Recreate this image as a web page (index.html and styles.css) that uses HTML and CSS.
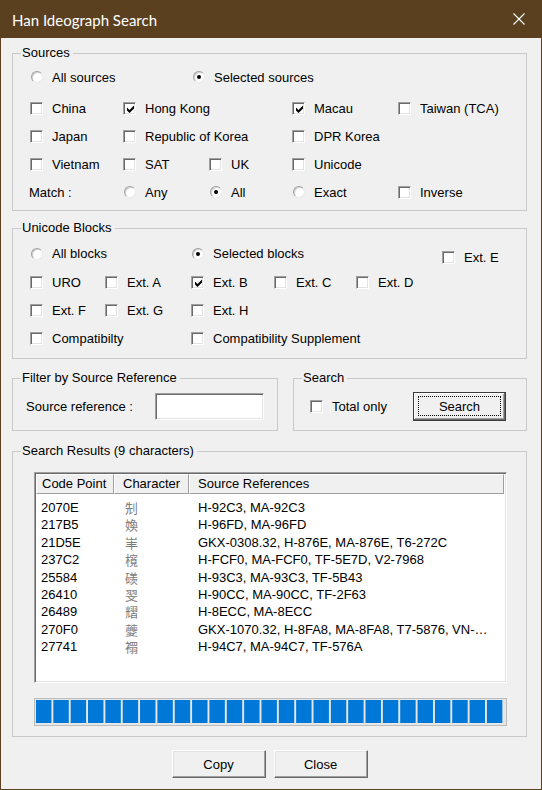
FILE: index.html
```html
<!DOCTYPE html>
<html lang="en">
<head>
    <meta charset="UTF-8">
    <title>Han Ideograph Search</title>
    <link rel="stylesheet" href="styles.css">
</head>
<body>
    <div class="window">
        <div class="titlebar">
            <span class="title">Han Ideograph Search</span>
            <svg class="close" width="12" height="12" viewBox="0 0 12 12">
                <path d="M0.5 0.5 L11.5 11.5 M11.5 0.5 L0.5 11.5" stroke="#fff" stroke-width="1.1" fill="none"/>
            </svg>
        </div>

        <div class="dialog">
            <fieldset class="group sources">
                <legend>Sources</legend>
                <div class="row first">
                    <label class="opt wide"><span class="radio"></span>All sources</label>
                    <label class="opt"><span class="radio on"></span>Selected sources</label>
                </div>
                <div class="src-grid">
                    <label class="opt"><span class="box"></span>China</label>
                    <label class="opt span2"><span class="box"><svg class="tick" width="8" height="8" viewBox="0 0 8 8"><path d="M0 2.5 L2.5 5 L7 0.5 L7 3.5 L2.5 8 L0 5.5 Z"/></svg></span>Hong Kong</label>
                    <label class="opt"><span class="box"><svg class="tick" width="8" height="8" viewBox="0 0 8 8"><path d="M0 2.5 L2.5 5 L7 0.5 L7 3.5 L2.5 8 L0 5.5 Z"/></svg></span>Macau</label>
                    <label class="opt"><span class="box"></span>Taiwan (TCA)</label>

                    <label class="opt"><span class="box"></span>Japan</label>
                    <label class="opt span2"><span class="box"></span>Republic of Korea</label>
                    <label class="opt"><span class="box"></span>DPR Korea</label>

                    <label class="opt newline"><span class="box"></span>Vietnam</label>
                    <label class="opt"><span class="box"></span>SAT</label>
                    <label class="opt"><span class="box"></span>UK</label>
                    <label class="opt"><span class="box"></span>Unicode</label>

                    <span class="match newline">Match :</span>
                    <label class="opt"><span class="radio"></span>Any</label>
                    <label class="opt"><span class="radio on"></span>All</label>
                    <label class="opt"><span class="radio"></span>Exact</label>
                    <label class="opt"><span class="box"></span>Inverse</label>
                </div>
            </fieldset>

            <fieldset class="group blocks">
                <legend>Unicode Blocks</legend>
                <div class="blk-grid">
                    <label class="opt span2"><span class="radio"></span>All blocks</label>
                    <label class="opt span3"><span class="radio on"></span>Selected blocks</label>
                    <label class="opt lower"><span class="box"></span>Ext. E</label>

                    <label class="opt"><span class="box"></span>URO</label>
                    <label class="opt"><span class="box"></span>Ext. A</label>
                    <label class="opt"><span class="box"><svg class="tick" width="8" height="8" viewBox="0 0 8 8"><path d="M0 2.5 L2.5 5 L7 0.5 L7 3.5 L2.5 8 L0 5.5 Z"/></svg></span>Ext. B</label>
                    <label class="opt"><span class="box"></span>Ext. C</label>
                    <label class="opt"><span class="box"></span>Ext. D</label>

                    <label class="opt newline"><span class="box"></span>Ext. F</label>
                    <label class="opt"><span class="box"></span>Ext. G</label>
                    <label class="opt"><span class="box"></span>Ext. H</label>

                    <label class="opt newline span2"><span class="box"></span>Compatibilty</label>
                    <label class="opt span4"><span class="box"></span>Compatibility Supplement</label>
                </div>
            </fieldset>

            <div class="pair">
                <fieldset class="group filter">
                    <legend>Filter by Source Reference</legend>
                    <div class="row">
                        <span class="field-label">Source reference :</span>
                        <span class="textbox"></span>
                    </div>
                </fieldset>
                <fieldset class="group search">
                    <legend>Search</legend>
                    <div class="row">
                        <label class="opt total"><span class="box"></span>Total only</label>
                        <button class="btn default"><span class="focus">Search</span></button>
                    </div>
                </fieldset>
            </div>

            <fieldset class="group results">
                <legend>Search Results (9 characters)</legend>
                <div class="list">
                    <div class="list-head">
                        <span>Code Point</span>
                        <span>Character</span>
                        <span>Source References</span>
                    </div>
                    <div class="list-body">
                        <div class="list-row"><span>2070E</span><span class="han">𠜎</span><span>H-92C3, MA-92C3</span></div>
                        <div class="list-row"><span>217B5</span><span class="han">𡞵</span><span>H-96FD, MA-96FD</span></div>
                        <div class="list-row"><span>21D5E</span><span class="han">𡵞</span><span>GKX-0308.32, H-876E, MA-876E, T6-272C</span></div>
                        <div class="list-row"><span>237C2</span><span class="han">𣟂</span><span>H-FCF0, MA-FCF0, TF-5E7D, V2-7968</span></div>
                        <div class="list-row"><span>25584</span><span class="han">𥖄</span><span>H-93C3, MA-93C3, TF-5B43</span></div>
                        <div class="list-row"><span>26410</span><span class="han">𦐐</span><span>H-90CC, MA-90CC, TF-2F63</span></div>
                        <div class="list-row"><span>26489</span><span class="han">𦒉</span><span>H-8ECC, MA-8ECC</span></div>
                        <div class="list-row"><span>270F0</span><span class="han">𧃰</span><span>GKX-1070.32, H-8FA8, MA-8FA8, T7-5876, VN-…</span></div>
                        <div class="list-row"><span>27741</span><span class="han">𧝁</span><span>H-94C7, MA-94C7, TF-576A</span></div>
                    </div>
                </div>
                <div class="progress">
                    <div class="progress-fill"></div>
                </div>
            </fieldset>

            <div class="buttons">
                <button class="btn">Copy</button>
                <button class="btn">Close</button>
            </div>
        </div>
    </div>
</body>
</html>
```

FILE: styles.css
```css
* {
    box-sizing: border-box;
}

body {
    margin: 0;
    background: #f0f0f0;
    font-family: "Liberation Sans", Arial, sans-serif;
    font-size: 13px;
    color: #000;
}

.window {
    width: 542px;
    height: 790px;
    border: 1px solid #5b4020;
    border-top: 0;
    background: #f0f0f0;
}

.titlebar {
    height: 38px;
    margin: 0 -1px;
    padding: 0 17px 0 12px;
    background: #5b4020;
    color: #fff;
    display: flex;
    align-items: center;
    justify-content: space-between;
}

.title {
    font-family: Lato, "Liberation Sans", sans-serif;
    font-size: 15px;
    margin-top: 1px;
}

.close {
    display: block;
}

.dialog {
    padding: 7px 14px 0 11px;
}

/* group boxes */
.group {
    margin: 0;
    min-width: 0;
    border: 1px solid #c9c9c9;
    padding: 0 8px 0 17px;
}

.group legend {
    padding: 0 3px 0 1px;
    margin-left: -9px;
    line-height: 16px;
}

.row {
    display: flex;
    align-items: center;
    height: 28px;
}

.opt {
    display: flex;
    align-items: center;
    gap: 9px;
    white-space: nowrap;
}

.sources {
    padding-top: 2px;
    padding-bottom: 4px;
}

.sources .first {
    margin-bottom: 3px;
}

.wide {
    width: 162px;
}

.src-grid {
    display: grid;
    grid-template-columns: 93px 86px 83px 106px auto;
    grid-auto-rows: 28px;
    align-items: center;
}

.blocks {
    margin-top: 9px;
    padding-top: 3px;
    padding-bottom: 6px;
}

.blk-grid {
    display: grid;
    grid-template-columns: 75px 86px 83px 82px 86px auto;
    grid-template-rows: 29px 28px 28px 28px;
    align-items: center;
}

.span2 { grid-column-end: span 2; }
.span3 { grid-column-end: span 3; }
.span4 { grid-column-end: span 4; }
.newline { grid-column-start: 1; }

.lower {
    margin-top: 8px;
}

.match {
    margin-left: -1px;
}

/* checkbox and radio */
.box {
    width: 13px;
    height: 13px;
    flex: none;
    background: #fff;
    border: 1px solid;
    border-color: #a0a0a0 #fff #fff #a0a0a0;
    box-shadow: inset 1px 1px #696969, inset -1px -1px #e3e3e3;
    padding: 2px 0 0 3px;
}

.tick {
    display: block;
    fill: #000;
}

.radio {
    width: 12px;
    height: 12px;
    margin-left: 1px;
    flex: none;
    border-radius: 50%;
    background: #fff;
    border: 1px solid;
    border-color: #a0a0a0 #eaeaea #eaeaea #a0a0a0;
    box-shadow: inset 1px 1px #d0d0d0;
    display: flex;
    align-items: center;
    justify-content: center;
}

.radio.on::after {
    content: '';
    width: 4px;
    height: 4px;
    border-radius: 50%;
    background: #000;
}

/* filter and search */
.pair {
    display: flex;
    gap: 15px;
    margin-top: 11px;
}

.filter,
.search {
    padding-top: 6px;
    padding-bottom: 9px;
}

.pair .row {
    height: 29px;
}

.filter {
    width: 266px;
    padding-left: 13px;
}

.filter legend {
    margin-left: -5px;
}

.search {
    width: 234px;
    padding-left: 16px;
}

.search legend {
    margin-left: -8px;
}

.field-label {
    width: 129px;
}

.textbox {
    width: 109px;
    height: 27px;
    background: #fff;
    border: 1px solid;
    border-color: #a0a0a0 #fff #fff #a0a0a0;
    box-shadow: inset 1px 1px #696969, inset -1px -1px #e3e3e3;
}

.total {
    width: 103px;
}

.btn {
    width: 94px;
    height: 28px;
    padding: 0;
    font: inherit;
    color: #000;
    background: #f0f0f0;
    border: 1px solid;
    border-color: #fff #696969 #696969 #fff;
    box-shadow: inset -1px -1px #a0a0a0, inset 1px 1px #e3e3e3;
}

.btn.default {
    width: 93px;
    height: 29px;
    border: 1px solid #3c3c3c;
    box-shadow: inset -1px -1px #696969, inset 1px 1px #fff, inset -2px -2px #a0a0a0;
    display: flex;
    padding: 3px 4px 4px 4px;
}

.focus {
    flex: 1;
    border: 1px dotted #000;
    display: flex;
    align-items: center;
    justify-content: center;
}

/* results */
.results {
    margin-top: 12px;
    padding: 13px 19px 10px 21px;
}

.results legend {
    margin-left: -13px;
}

.list {
    height: 211px;
    padding: 1px;
    background: #fff;
    border: 1px solid;
    border-color: #a0a0a0 #fff #fff #a0a0a0;
    box-shadow: inset 1px 1px #696969, inset -1px -1px #e3e3e3;
}

.list-head,
.list-row {
    display: grid;
    grid-template-columns: 78px 75px 1fr;
}

.list-head {
    height: 20px;
    margin-right: 1px;
    line-height: 18px;
}

.list-head span {
    background: #f0f0f0;
    border: 1px solid;
    border-color: #fff #a0a0a0 #a0a0a0 #fff;
    padding-left: 8px;
}

.list-head span:first-child {
    padding-left: 5px;
}

.list-body {
    padding-top: 5px;
}

.list-row {
    height: 17.4px;
    line-height: 17.4px;
}

.list-row span {
    padding-left: 9px;
    white-space: nowrap;
    overflow: hidden;
}

.list-row span:first-child {
    padding-left: 5px;
}

.list-row .han {
    padding-left: 11px;
    color: #7c7c7c;
    font-family: "Noto Sans CJK TC", "Noto Sans CJK SC", sans-serif;
}

.progress {
    height: 28px;
    margin-top: 15px;
    padding: 1px 3px 2px 1px;
    background: #e6e6e6;
    border: 1px solid #bcbcbc;
}

.progress-fill {
    height: 100%;
    background: linear-gradient(to right, #0078d7 15px, transparent 15px) 0 0 / 17.35px 100% repeat-x;
}

.buttons {
    display: flex;
    justify-content: center;
    gap: 8px;
    margin-top: 13px;
}
```
